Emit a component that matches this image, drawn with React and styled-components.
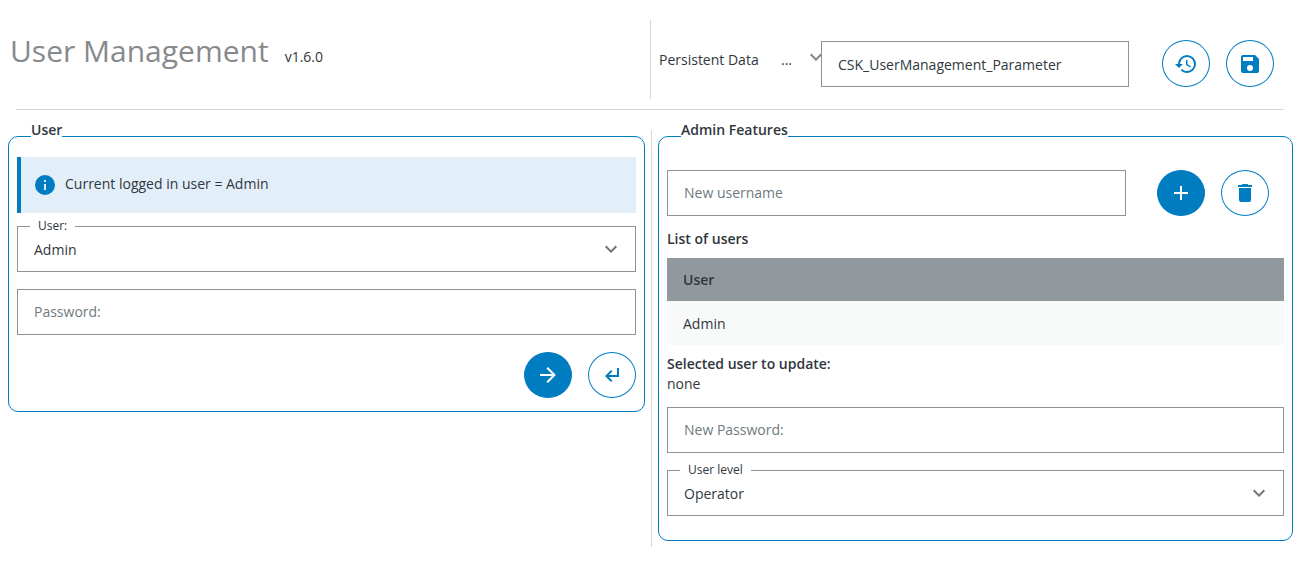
import React from 'react';
import styled, { createGlobalStyle } from 'styled-components';

const Global = createGlobalStyle`
  html, body { margin: 0; padding: 0; background: #fff; }
  body { font-family: "Open Sans", "Liberation Sans", sans-serif; font-size: 14px; color: #30373d; }
  * { box-sizing: border-box; }
`;

const blue = '#007cc1';
const grey = '#8f9396';

const P = {
  save: 'M15,9H5V5H15M12,19A3,3 0 0,1 9,16A3,3 0 0,1 12,13A3,3 0 0,1 15,16A3,3 0 0,1 12,19M17,3H5C3.89,3 3,3.9 3,5V19A2,2 0 0,0 5,21H19A2,2 0 0,0 21,19V7L17,3Z',
  del: 'M19,4H15.5L14.5,3H9.5L8.5,4H5V6H19M6,19A2,2 0 0,0 8,21H16A2,2 0 0,0 18,19V7H6V19Z',
  history: 'M13.5,8H12V13L16.28,15.54L17,14.33L13.5,12.25V8M13,3A9,9 0 0,0 4,12H1L4.96,16.03L9,12H6A7,7 0 0,1 13,5A7,7 0 0,1 20,12A7,7 0 0,1 13,19C11.07,19 9.32,18.21 8.06,16.94L6.64,18.36C8.27,20 10.5,21 13,21A9,9 0 0,0 22,12A9,9 0 0,0 13,3',
  ret: 'M17,5H19V14H8.83L12.41,17.59L11,19L5,13L11,7L12.41,8.41L8.83,12H17V5Z',
  arrow: 'M4,11V13H16L10.5,18.5L11.92,19.92L19.84,12L11.92,4.08L10.5,5.5L16,11H4Z',
  plus: 'M19,13H13V19H11V13H5V11H11V5H13V11H19V13Z',
  info: 'M13,9H11V7H13M13,17H11V11H13M12,2A10,10 0 0,0 2,12A10,10 0 0,0 12,22A10,10 0 0,0 22,12A10,10 0 0,0 12,2Z',
  chevron: 'M7.41,8.58L12,13.17L16.59,8.58L18,10L12,16L6,10L7.41,8.58Z',
};

const Icon = ({ d, size = 24, color = 'currentColor' }) => (
  <svg width={size} height={size} viewBox="0 0 24 24" fill={color} style={{ display: 'block', flex: 'none' }}>
    <path d={d} />
  </svg>
);

const Page = styled.div`
  width: 1300px;
  height: 581px;
  padding-top: 20px;
  overflow: hidden;
`;

const Header = styled.header`
  display: grid;
  grid-template-columns: 650px 1fr;
  height: 79px;
`;

const TitleBlock = styled.div`
  display: flex;
  align-items: baseline;
  padding: 10px 0 0 10px;
`;

const Title = styled.h1`
  margin: 0;
  font-size: 30px;
  line-height: 42px;
  font-weight: 400;
  color: #868a8d;
`;

const Version = styled.span`
  margin-left: 16px;
  font-size: 14px;
  color: #30373d;
`;

const PersistBar = styled.div`
  display: flex;
  align-items: flex-start;
  border-left: 1px solid #d4d6d7;
  padding: 20px 0 0 8px;
`;

const PersistLabel = styled.span`
  width: 122px;
  font-size: 14px;
  line-height: 40px;
`;

const Dots = styled.span`
  width: 23px;
  line-height: 40px;
  font-size: 14px;
`;

const SmallChevron = styled.span`
  width: 17px;
  margin-top: 5px;
  color: #7f8589;
`;

const TextBox = styled.div`
  display: flex;
  align-items: center;
  width: ${p => p.$width || 'auto'};
  height: 46px;
  padding: 0 0 2px 16px;
  border: 1px solid ${grey};
  background: #fff;
  font-size: 14px;
  color: ${p => (p.$placeholder ? '#6f7a80' : '#30373d')};
`;

const HeaderBox = styled(TextBox)`
  margin-top: 1px;
  width: 308px;
  padding-bottom: 0;
`;

const RoundButton = styled.button`
  flex: none;
  display: flex;
  align-items: center;
  justify-content: center;
  width: 48px;
  height: 47px;
  padding: 0;
  border-radius: 50%;
  border: 1px solid ${blue};
  background: ${p => (p.$filled ? blue : '#fff')};
  color: ${p => (p.$filled ? '#fff' : blue)};
`;

const HeaderButtons = styled.div`
  display: flex;
  gap: 16px;
  margin-left: 33px;
`;

const Rule = styled.hr`
  margin: 10px 16px 0;
  border: 0;
  border-top: 1px solid #d4d6d7;
`;

const Main = styled.main`
  display: grid;
  grid-template-columns: 651px 1fr;
`;

const Column = styled.section`
  padding: 11px 6px 0 8px;
`;

const RightColumn = styled.section`
  margin-top: 20px;
  height: 417px;
  border-left: 1px solid #d4d6d7;
  padding: 0 7px 0 6px;
`;

const Panel = styled.fieldset`
  margin: 0;
  min-width: 0;
  padding: 5px 8px 0;
  border: 1px solid ${blue};
  border-radius: 10px;
  height: ${p => p.$height};
`;

const PanelTitle = styled.legend`
  position: relative;
  top: -1px;
  margin-left: 14px;
  padding: 0 0 12px;
  font-size: 14px;
  line-height: 19px;
  font-weight: 600;
  color: #30373d;
`;

const RightPanel = styled(Panel)`
  margin-top: -9px;
`;

const InfoBox = styled.div`
  display: flex;
  align-items: center;
  gap: 8px;
  height: 56px;
  padding-left: 12px;
  border-left: 4px solid ${blue};
  background: #e3eff8;
  font-size: 14px;
`;

const InfoText = styled.span`
  margin-top: -4px;
`;

const SelectSet = styled.fieldset`
  margin: ${p => p.$mt || 0} 0 0;
  min-width: 0;
  height: 46px;
  padding: 0 16px;
  border: 1px solid ${grey};
`;

const SelectLegend = styled.legend`
  position: relative;
  top: -1px;
  margin-left: -4px;
  padding: 0 8px;
  height: 0;
  font-size: 12px;
  line-height: 0;
  color: #30373d;
`;

const SelectValue = styled.div`
  display: flex;
  align-items: center;
  justify-content: space-between;
  height: 44px;
  font-size: 14px;
`;

const SelectChevron = styled.span`
  margin-right: -4px;
  color: #6f767a;
`;

const Actions = styled.div`
  display: flex;
  justify-content: flex-end;
  gap: 16px;
  margin-top: 17px;
`;

const ActionButton = styled(RoundButton)`
  height: 46px;
`;

const AddRow = styled.div`
  display: flex;
  align-items: center;
  margin-top: 13px;
`;

const AddButtons = styled.div`
  display: flex;
  gap: 16px;
  margin-left: 31px;
`;

const SectionLabel = styled.div`
  margin-top: ${p => p.$mt || 0};
  font-size: 14px;
  line-height: 19px;
  font-weight: 600;
`;

const UserTable = styled.div`
  margin-top: 10px;
`;

const TableHead = styled.div`
  display: flex;
  align-items: center;
  height: 43px;
  padding-left: 16px;
  background: #92999e;
  font-weight: 600;
  font-size: 14px;
  color: #30373d;
`;

const TableRow = styled.div`
  display: flex;
  align-items: center;
  height: 44px;
  padding-left: 16px;
  background: #f8fafa;
  font-size: 14px;
`;

const PlainLine = styled.div`
  font-size: 14px;
  line-height: 19px;
  margin-top: 1px;
`;

const Stack = styled.div`
  margin-top: ${p => p.$mt};
`;

const Select = ({ label, value, mt }) => (
  <SelectSet $mt={mt}>
    <SelectLegend>{label}</SelectLegend>
    <SelectValue>
      {value}
      <SelectChevron><Icon d={P.chevron} /></SelectChevron>
    </SelectValue>
  </SelectSet>
);

export default function App() {
  return (
    <Page>
      <Global />
      <Header>
        <TitleBlock>
          <Title>User Management</Title>
          <Version>v1.6.0</Version>
        </TitleBlock>
        <PersistBar>
          <PersistLabel>Persistent Data</PersistLabel>
          <Dots>...</Dots>
          <SmallChevron><Icon d={P.chevron} /></SmallChevron>
          <HeaderBox>CSK_UserManagement_Parameter</HeaderBox>
          <HeaderButtons>
            <RoundButton aria-label="Reload"><Icon d={P.history} /></RoundButton>
            <RoundButton aria-label="Save"><Icon d={P.save} /></RoundButton>
          </HeaderButtons>
        </PersistBar>
      </Header>
      <Rule />
      <Main>
        <Column>
          <Panel $height="291px">
            <PanelTitle>User</PanelTitle>
            <InfoBox>
              <Icon d={P.info} color={blue} />
              <InfoText>Current logged in user = Admin</InfoText>
            </InfoBox>
            <Select label="User:" value="Admin" mt="13px" />
            <Stack $mt="17px">
              <TextBox $placeholder>Password:</TextBox>
            </Stack>
            <Actions>
              <ActionButton $filled aria-label="Login"><Icon d={P.arrow} /></ActionButton>
              <ActionButton aria-label="Logout"><Icon d={P.ret} /></ActionButton>
            </Actions>
          </Panel>
        </Column>
        <RightColumn>
          <RightPanel $height="420px">
            <PanelTitle>Admin Features</PanelTitle>
            <AddRow>
              <TextBox $placeholder $width="459px">New username</TextBox>
              <AddButtons>
                <ActionButton $filled aria-label="Add"><Icon d={P.plus} /></ActionButton>
                <ActionButton aria-label="Delete"><Icon d={P.del} /></ActionButton>
              </AddButtons>
            </AddRow>
            <SectionLabel $mt="13px">List of users</SectionLabel>
            <UserTable>
              <TableHead>User</TableHead>
              <TableRow>Admin</TableRow>
            </UserTable>
            <SectionLabel $mt="9px">Selected user to update:</SectionLabel>
            <PlainLine>none</PlainLine>
            <Stack $mt="14px">
              <TextBox $placeholder>New Password:</TextBox>
            </Stack>
            <Select label="User level" value="Operator" mt="17px" />
          </RightPanel>
        </RightColumn>
      </Main>
    </Page>
  );
}
